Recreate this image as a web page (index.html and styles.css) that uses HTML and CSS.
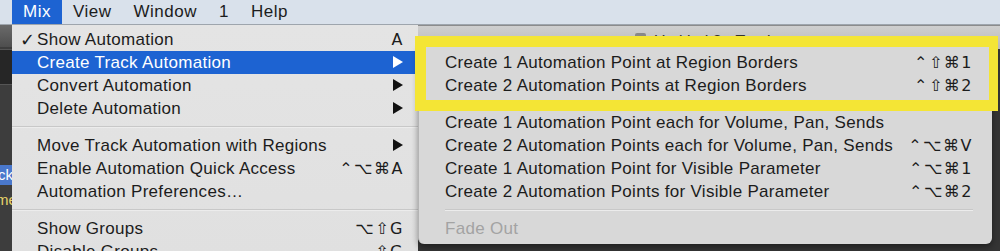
FILE: index.html
```html
<!DOCTYPE html>
<html lang="en">
  <head>
    <meta charset="UTF-8" />
    <title>Mix menu</title>
    <link rel="stylesheet" href="styles.css">
  </head>
  <body>
    <div class="menubar">
      <span class="top active">Mix</span>
      <span class="top">View</span>
      <span class="top">Window</span>
      <span class="top">1</span>
      <span class="top">Help</span>
    </div>

    <div class="desk">
      <!-- app window peeking out on the left -->
      <div class="side">
        <div class="side-top"></div>
        <div class="side-box"></div>
        <div class="side-tab">ck</div>
        <div class="side-name">me</div>
      </div>

      <!-- title bar of the window behind the menus -->
      <div class="titlebar">
        <span class="doc-icon"></span>
        <span>Untitled 2 - Tracks</span>
      </div>

      <div class="menu main">
        <div class="item"><span class="check">&#10003;</span><span>Show Automation</span><span class="key">A</span></div>
        <div class="item selected"><span></span><span>Create Track Automation</span><span class="key"><i class="arrow"></i></span></div>
        <div class="item"><span></span><span>Convert Automation</span><span class="key"><i class="arrow"></i></span></div>
        <div class="item"><span></span><span>Delete Automation</span><span class="key"><i class="arrow"></i></span></div>
        <div class="sep"></div>
        <div class="item"><span></span><span>Move Track Automation with Regions</span><span class="key"><i class="arrow"></i></span></div>
        <div class="item"><span></span><span>Enable Automation Quick Access</span><span class="key">&#8963;&#8997;&#8984;A</span></div>
        <div class="item"><span></span><span>Automation Preferences&hellip;</span><span class="key"></span></div>
        <div class="sep"></div>
        <div class="item"><span></span><span>Show Groups</span><span class="key">&#8997;&#8679;G</span></div>
        <div class="item"><span></span><span>Disable Groups</span><span class="key">&#8679;G</span></div>
      </div>

      <div class="menu sub">
        <div class="item"><span>Create 1 Automation Point at Region Borders</span><span class="key">&#8963;&#8679;&#8984;1</span></div>
        <div class="item"><span>Create 2 Automation Points at Region Borders</span><span class="key">&#8963;&#8679;&#8984;2</span></div>
        <div class="sep"></div>
        <div class="item"><span>Create 1 Automation Point each for Volume, Pan, Sends</span><span class="key"></span></div>
        <div class="item"><span>Create 2 Automation Points each for Volume, Pan, Sends</span><span class="key">&#8963;&#8997;&#8984;V</span></div>
        <div class="item"><span>Create 1 Automation Point for Visible Parameter</span><span class="key">&#8963;&#8997;&#8984;1</span></div>
        <div class="item"><span>Create 2 Automation Points for Visible Parameter</span><span class="key">&#8963;&#8997;&#8984;2</span></div>
        <div class="sep"></div>
        <div class="item disabled"><span>Fade Out</span><span class="key"></span></div>
      </div>

      <!-- yellow highlight drawn over the screenshot -->
      <div class="mark"></div>
    </div>
  </body>
</html>
```

FILE: styles.css
```css
body {
  margin: 0;
  width: 1000px;
  height: 251px;
  overflow: hidden;
  font-family: "Liberation Sans", Arial, "DejaVu Sans", sans-serif;
  font-size: 17px;
  color: #1c1c1c;
  background-color: #333;
}

.menubar {
  display: flex;
  height: 25px;
  padding-left: 12px;
  background-color: #d9e1eb;
  border-bottom: 1px solid #9ea5ad;
  box-sizing: border-box;
}

.top {
  display: flex;
  align-items: center;
  padding: 0 11px;
  letter-spacing: 0.5px;
}

.top.active {
  background-color: #1d63d2;
  color: #fff;
}

.desk {
  position: relative;
  height: 226px;
  background-color: #343434;
  overflow: hidden;
}

.side {
  width: 12px;
  height: 100%;
  overflow: hidden;
  background-color: #3d3d3d;
}

.side-top {
  height: 22px;
  background: linear-gradient(#6a6a6a, #4e4e4e);
}

.side-box {
  height: 34px;
  margin-top: 2px;
  background-color: #262626;
  border-top: 1px solid #555;
  border-bottom: 1px solid #555;
}

.side-tab {
  margin-top: 80px;
  height: 20px;
  line-height: 20px;
  background-color: #4a78cc;
  color: #fff;
  font-size: 15px;
  text-indent: -2px;
  white-space: nowrap;
}

.side-name {
  margin-top: 6px;
  color: #e6d36a;
  font-size: 15px;
  text-indent: -4px;
  white-space: nowrap;
}

.titlebar {
  position: absolute;
  left: 418px;
  top: 0;
  width: 582px;
  height: 24px;
  padding-top: 7px;
  box-sizing: border-box;
  background: linear-gradient(#cfcfcf, #b9b9b9);
  border-top: 1px solid #8c8c8c;
  display: flex;
  align-items: flex-start;
  justify-content: center;
  gap: 8px;
  font-size: 16px;
  color: #333;
}

.doc-icon {
  width: 11px;
  height: 13px;
  background-color: #888;
  border-radius: 2px;
}

.menu {
  position: absolute;
  box-sizing: border-box;
}

.main {
  left: 12px;
  top: 0;
  width: 406px;
  height: 230px;
  padding: 3px 14px 0 8px;
  background: linear-gradient(#e4e4e4, #e0e0e0);
}

.sub {
  left: 418px;
  top: 22px;
  width: 574px;
  padding: 4px 19px 4px 26px;
  background-color: #d8d8d8;
  border-left: 1px solid #b4b4b4;
  border-radius: 0 0 6px 6px;
  box-shadow: 0 3px 6px rgba(0, 0, 0, 0.4);
}

.item {
  display: grid;
  height: 23px;
  align-items: center;
  letter-spacing: 0.3px;
  white-space: nowrap;
}

.main .item {
  grid-template-columns: 17px 1fr auto;
  margin: 0 -14px 0 -8px;
  padding: 0 14px 0 8px;
}

.sub .item {
  grid-template-columns: 1fr auto;
}

.item.selected {
  background-color: #1d63d2;
  color: #fff;
}

.item.disabled {
  color: #a3a3a3;
}

.check {
  font-family: "DejaVu Sans", sans-serif;
  font-size: 18px;
  font-weight: bold;
}

.key {
  font-family: "DejaVu Sans", sans-serif;
  font-size: 16px;
  letter-spacing: 1.5px;
  text-align: right;
}

.arrow {
  display: inline-block;
  width: 0;
  height: 0;
  margin-right: 1px;
  border-left: 10px solid #111;
  border-top: 6px solid transparent;
  border-bottom: 6px solid transparent;
}

.selected .arrow {
  border-left-color: #fff;
}

.sep {
  height: 14px;
  display: flex;
  align-items: center;
}

.sep::before {
  content: "";
  flex: 1;
  height: 1px;
  background-color: #c8c8c8;
  border-bottom: 1px solid #ececec;
}

.main .sep {
  margin: 0 -14px 0 -8px;
}

.mark {
  position: absolute;
  left: 415px;
  top: 11px;
  width: 583px;
  height: 75px;
  box-sizing: border-box;
  border: 11px solid #f4e535;
  border-right-width: 9px;
}
```
